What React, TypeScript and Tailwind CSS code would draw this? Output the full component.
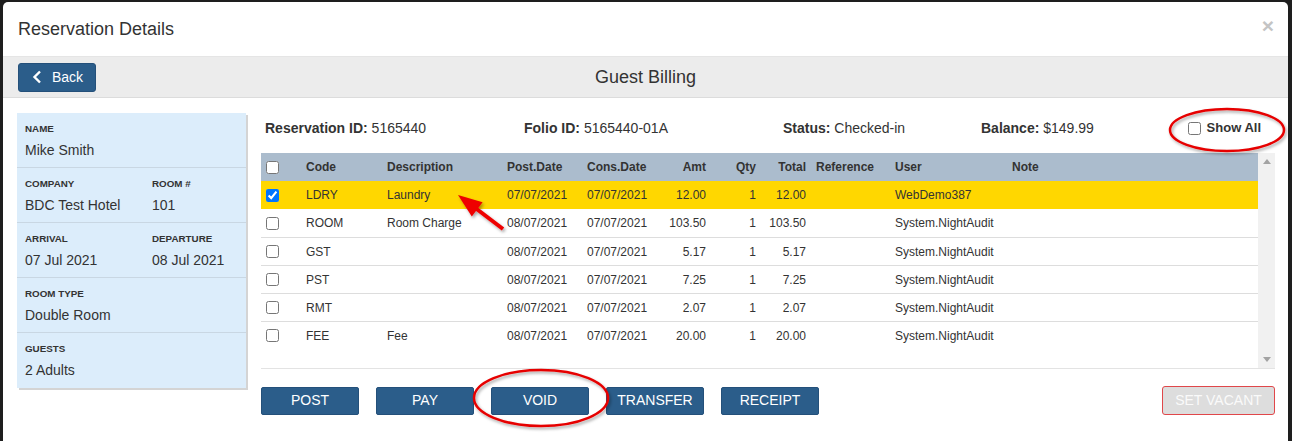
const rows = [
  { code: "LDRY", desc: "Laundry", post: "07/07/2021", amt: "12.00", total: "12.00", user: "WebDemo387", checked: true },
  { code: "ROOM", desc: "Room Charge", post: "08/07/2021", amt: "103.50", total: "103.50", user: "System.NightAudit" },
  { code: "GST", desc: "", post: "08/07/2021", amt: "5.17", total: "5.17", user: "System.NightAudit" },
  { code: "PST", desc: "", post: "08/07/2021", amt: "7.25", total: "7.25", user: "System.NightAudit" },
  { code: "RMT", desc: "", post: "08/07/2021", amt: "2.07", total: "2.07", user: "System.NightAudit" },
  { code: "FEE", desc: "Fee", post: "08/07/2021", amt: "20.00", total: "20.00", user: "System.NightAudit" },
];

const cols = "grid grid-cols-[35px_81px_120px_80px_80px_54px_50px_50px_79px_117px_1fr] items-center";

function Field({ label, value }: { label: string; value: string }) {
  return (
    <div>
      <p className="text-[9.8px] font-bold uppercase leading-[12px] text-[#333]">{label}</p>
      <p className="mt-[5px] text-[14px] leading-[20px] text-[#333]">{value}</p>
    </div>
  );
}

function Section({ children, last }: { children: React.ReactNode; last?: boolean }) {
  return (
    <div
      className={
        "grid h-[55px] grid-cols-[127px_1fr] pl-2 pt-[10px] " +
        (last ? "" : "border-b border-[#c9d7e3]")
      }
    >
      {children}
    </div>
  );
}

function ActionButton({ label }: { label: string }) {
  return (
    <button className="h-[28px] w-[98px] rounded-[2px] border border-[#24507a] bg-[#2b5d8a] text-[14px] text-white">
      {label}
    </button>
  );
}

export default function App() {
  return (
    <div className="relative h-[441px] w-full overflow-hidden bg-[#1e1e1e] pl-[3px] pr-[4px] pt-[2px] font-['Liberation_Sans',Arial,sans-serif]">
      <div className="h-full rounded-t-[5px] bg-white">
        {/* header */}
        <div className="flex h-[55px] items-center justify-between border-b border-[#e5e5e5] pl-[15px] pr-[14px]">
          <h1 className="text-[18px] leading-none text-[#333]">Reservation Details</h1>
          <span className="-mt-[8px] text-[21px] font-bold leading-none text-[#c4c4c4]">×</span>
        </div>

        {/* toolbar */}
        <div className="grid h-[41px] grid-cols-[1fr_auto_1fr] items-center border-b border-[#dcdcdc] bg-[#ececec]">
          <div className="pl-[15px]">
            <button className="flex h-[29px] w-[78px] items-center rounded-[3px] border border-[#24507a] bg-[#2b5d8a] pl-[13px] text-[14px] text-white">
              <svg width="10" height="14" viewBox="0 0 10 14" className="mr-[10px]">
                <path d="M8 1.5 L2.5 7 L8 12.5" fill="none" stroke="white" strokeWidth="2.4" />
              </svg>
              Back
            </button>
          </div>
          <h2 className="text-[18px] leading-none text-[#333]">Guest Billing</h2>
          <div />
        </div>

        {/* body */}
        <div className="flex items-start gap-[15px] pl-[14px] pr-[13px] pt-[15px]">
          <div className="w-[229px] shrink-0 bg-[#dcedfb] shadow-[2px_2px_0_#d4d4d4]">
            <Section>
              <Field label="Name" value="Mike Smith" />
            </Section>
            <Section>
              <Field label="Company" value="BDC Test Hotel" />
              <Field label="Room #" value="101" />
            </Section>
            <Section>
              <Field label="Arrival" value="07 Jul 2021" />
              <Field label="Departure" value="08 Jul 2021" />
            </Section>
            <Section>
              <Field label="Room Type" value="Double Room" />
            </Section>
            <Section last>
              <Field label="Guests" value="2 Adults" />
            </Section>
          </div>

          <div className="flex-1">
            <div className="flex h-[40px] items-start pl-[4px] pr-[14px] pt-[5px] text-[14px] leading-[20px] text-[#333]">
              <div className="w-[259px]">
                <b>Reservation ID:</b> 5165440
              </div>
              <div className="w-[259px]">
                <b>Folio ID:</b> 5165440-01A
              </div>
              <div className="w-[198px]">
                <b>Status:</b> Checked-in
              </div>
              <div className="flex-1">
                <b>Balance:</b> $149.99
              </div>
              <label className="flex h-[20px] items-center gap-[6px] text-[13px] font-bold">
                <input type="checkbox" className="m-0 h-[13px] w-[13px]" />
                Show All
              </label>
            </div>

            <div className="flex h-[216px] border-b border-[#e3e3e3]">
              <div className="flex-1 text-[12px] text-[#333]">
                <div className={cols + " h-[28px] bg-[#abbccd] font-bold"}>
                  <div className="pl-[5px]">
                    <input type="checkbox" className="m-0 block h-[13px] w-[13px]" />
                  </div>
                  <div className="pl-[10px]">Code</div>
                  <div className="pl-[10px]">Description</div>
                  <div className="pl-[10px]">Post.Date</div>
                  <div className="pl-[10px]">Cons.Date</div>
                  <div className="pr-[5px] text-right">Amt</div>
                  <div className="pr-[5px] text-right">Qty</div>
                  <div className="pr-[5px] text-right">Total</div>
                  <div className="pl-[5px]">Reference</div>
                  <div className="pl-[5px]">User</div>
                  <div className="pl-[5px]">Note</div>
                </div>
                {rows.map((r, i) => (
                  <div
                    key={r.code}
                    className={
                      cols +
                      " h-[28px] " +
                      (r.checked ? "bg-[#ffd700]" : "") +
                      (i >= 2 ? " border-t border-[#dddddd]" : "")
                    }
                  >
                    <div className="pl-[5px]">
                      <input type="checkbox" defaultChecked={r.checked} className="m-0 block h-[13px] w-[13px]" />
                    </div>
                    <div className="pl-[10px]">{r.code}</div>
                    <div className="pl-[10px]">{r.desc}</div>
                    <div className="pl-[10px]">{r.post}</div>
                    <div className="pl-[10px]">07/07/2021</div>
                    <div className="pr-[5px] text-right">{r.amt}</div>
                    <div className="pr-[5px] text-right">1</div>
                    <div className="pr-[5px] text-right">{r.total}</div>
                    <div className="pl-[5px]"></div>
                    <div className="pl-[5px]">{r.user}</div>
                    <div className="pl-[5px]"></div>
                  </div>
                ))}
              </div>
              <div className="flex w-[17px] flex-col items-center justify-between bg-[#f1f1f1] py-[6px]">
                <svg width="8" height="5" viewBox="0 0 8 5">
                  <path d="M0 5 L4 0 L8 5Z" fill="#a3a3a3" />
                </svg>
                <svg width="8" height="5" viewBox="0 0 8 5">
                  <path d="M0 0 L8 0 L4 5Z" fill="#a3a3a3" />
                </svg>
              </div>
            </div>

            <div className="mt-[17px] flex items-center gap-[17px]">
              <ActionButton label="POST" />
              <ActionButton label="PAY" />
              <ActionButton label="VOID" />
              <ActionButton label="TRANSFER" />
              <ActionButton label="RECEIPT" />
              <button className="ml-auto h-[29px] w-[113px] rounded-[3px] border border-[#e0474a] bg-[#dddddd] text-[14px] text-[#fafafa]">
                SET VACANT
              </button>
            </div>
          </div>
        </div>
      </div>

      {/* annotations */}
      <svg className="pointer-events-none absolute left-0 top-0" width="1292" height="441" viewBox="0 0 1292 441">
        <defs>
          <filter id="sh" x="-20%" y="-20%" width="140%" height="140%">
            <feDropShadow dx="1.5" dy="2" stdDeviation="1.5" floodColor="#000" floodOpacity="0.35" />
          </filter>
        </defs>
        <g filter="url(#sh)">
          <ellipse cx="1227" cy="130" rx="57" ry="21" fill="none" stroke="#e60000" strokeWidth="2.5" />
          <ellipse cx="541" cy="398" rx="67" ry="28" fill="none" stroke="#e60000" strokeWidth="2.5" />
          <line x1="503" y1="229" x2="476" y2="208.5" stroke="#ee0000" strokeWidth="4" />
          <path d="M458 195 L482.6 202.2 L471.8 216.6Z" fill="#ee0000" />
        </g>
      </svg>
    </div>
  );
}
